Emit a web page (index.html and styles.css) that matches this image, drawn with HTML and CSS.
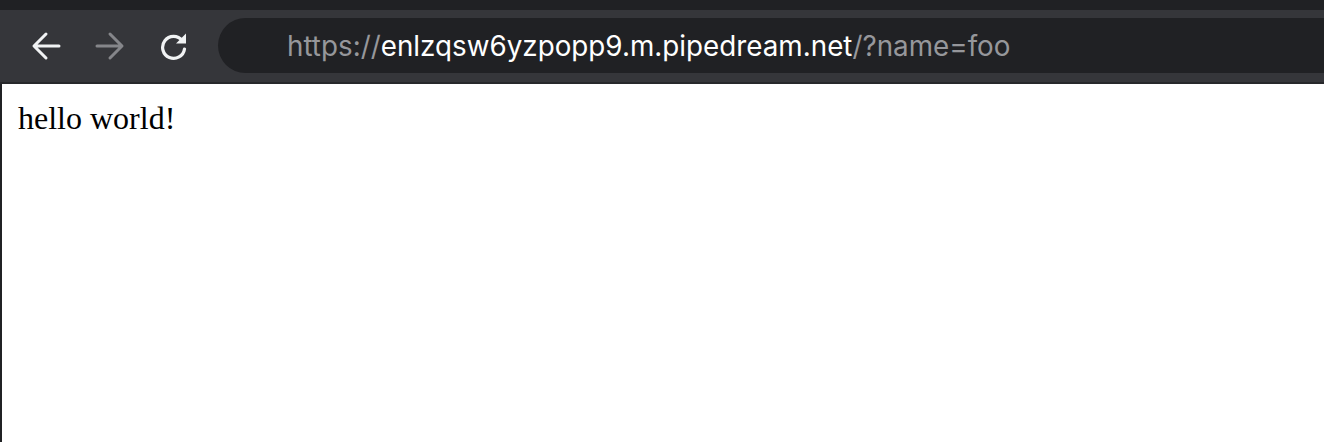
FILE: index.html
```html
<!DOCTYPE html>
<html>
<head>
<meta charset="utf-8">
<link rel="stylesheet" href="styles.css">
</head>
<body>
<div class="window">
  <div class="topband"></div>
  <div class="toolbar">
    <div class="nav">
      <svg class="icon" width="30" height="30" viewBox="0 0 30 30">
        <path d="M28 15H3.5M15 3L3 15l12 12" fill="none" stroke="#f1f3f4" stroke-width="3" stroke-linecap="round" stroke-linejoin="round"/>
      </svg>
      <svg class="icon" width="30" height="30" viewBox="0 0 30 30">
        <path d="M2 15h24.5M15 3l12 12-12 12" fill="none" stroke="#85868a" stroke-width="3" stroke-linecap="round" stroke-linejoin="round"/>
      </svg>
      <svg class="icon" width="30" height="30" viewBox="0 0 30 30">
        <path d="M23.2 9.5A11 11 0 1 0 25.5 18" fill="none" stroke="#f1f3f4" stroke-width="3.2" stroke-linecap="round"/>
        <path d="M17 12.5H27V2.5Z" fill="#f1f3f4"/>
      </svg>
    </div>
    <div class="omnibox">
      <span class="dim">https://</span><span class="host">enlzqsw6yzpopp9.m.pipedream.net</span><span class="dim">/?name=foo</span>
    </div>
  </div>
  <div class="page">
    <p class="hello">hello world!</p>
  </div>
</div>
</body>
</html>
```

FILE: styles.css
```css
html, body {
  margin: 0;
  padding: 0;
  height: 100%;
  background: #ffffff;
}
.window {
  display: flex;
  flex-direction: column;
  height: 442px;
  overflow: hidden;
}
.topband {
  height: 10px;
  background: #202124;
  flex: none;
}
.toolbar {
  height: 72px;
  flex: none;
  background: #35363a;
  border-bottom: 2px solid #27282b;
  display: flex;
  align-items: center;
}
.nav {
  display: flex;
  align-items: center;
  gap: 34px;
  padding-left: 31px;
  width: 187px;
  flex: none;
}
.icon {
  display: block;
  flex: none;
}
.omnibox {
  flex: 1;
  height: 55px;
  margin-top: -1px;
  background: #202124;
  border-radius: 28px 0 0 28px;
  display: flex;
  align-items: center;
  padding-left: 69px;
  font-family: "Inter", "Liberation Sans", sans-serif;
  font-size: 27.8px;
  letter-spacing: 0;
  white-space: nowrap;
}
.dim {
  color: #96979b;
}
.host {
  color: #ffffff;
}
.page {
  flex: 1;
  border-left: 2px solid #202124;
  padding: 0 16px;
}
.hello {
  margin: 16px 0 0 0;
  font-family: "Liberation Serif", "Times New Roman", serif;
  font-size: 32px;
  line-height: 36px;
  color: #000;
}
```
